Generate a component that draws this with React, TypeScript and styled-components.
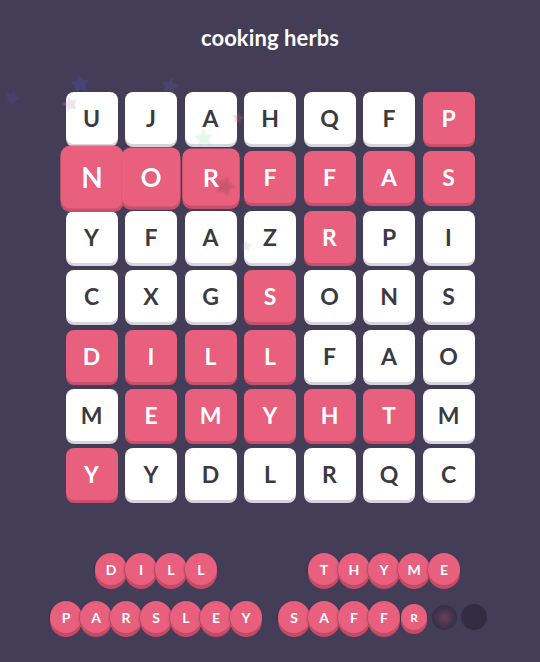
import React from "react";
import styled, { createGlobalStyle } from "styled-components";

const GlobalStyle = createGlobalStyle`
  html, body {
    margin: 0;
    padding: 0;
    background: #433d57;
  }
  body {
    font-family: "Lato", "Open Sans", sans-serif;
    -webkit-font-smoothing: antialiased;
  }
`;

const Page = styled.div`
  position: relative;
  width: 540px;
  height: 662px;
  overflow: hidden;
  display: flex;
  flex-direction: column;
  align-items: center;
  background: #433d57;
`;

const Title = styled.h1`
  margin: 25px 0 0;
  font-size: 22px;
  line-height: 26px;
  font-weight: 700;
  color: #ffffff;
  letter-spacing: 0.1px;
`;

const Board = styled.div`
  margin-top: 41px;
  display: grid;
  grid-template-columns: repeat(7, 52px);
  grid-auto-rows: 52px;
  gap: 7.4px 7.5px;
`;

const Tile = styled.div<{ $found: boolean; $scale: number }>`
  position: relative;
  z-index: ${(p) => (p.$scale > 1 ? 2 : 1)};
  display: flex;
  align-items: center;
  justify-content: center;
  border-radius: 8px;
  font-size: 23px;
  font-weight: 700;
  background: ${(p) => (p.$found ? "#e8607d" : "#ffffff")};
  color: ${(p) => (p.$found ? "#ffffff" : "#3c3a41")};
  box-shadow: 0 3px 0 ${(p) => (p.$found ? "#c94f6a" : "#d6d4dd")};
  transform: scale(${(p) => p.$scale});
`;

const Words = styled.div`
  margin-top: 53px;
  display: grid;
  grid-template-columns: repeat(2, 228px);
  row-gap: 16px;
`;

const Word = styled.div`
  display: flex;
  justify-content: center;
`;

const Slot = styled.div`
  width: 30px;
  height: 32px;
  display: flex;
  align-items: center;
  justify-content: center;
`;

const Bubble = styled.div<{ $size: number; $state: "found" | "fading" | "empty" }>`
  flex-shrink: 0;
  width: ${(p) => p.$size}px;
  height: ${(p) => p.$size}px;
  border-radius: 50%;
  display: flex;
  align-items: center;
  justify-content: center;
  font-size: ${(p) => Math.round(p.$size * 0.45)}px;
  font-weight: 700;
  color: ${(p) => (p.$state === "found" ? "#ffffff" : "rgba(232, 96, 125, 0.6)")};
  background: ${(p) =>
    p.$state === "fading"
      ? "radial-gradient(circle, #6a4158 0%, #4a3550 40%, #322d43 75%)"
      : p.$state === "found"
      ? "#e8607d"
      : "#322d43"};
  box-shadow: ${(p) =>
    p.$state === "found"
      ? "0 4px 0 #c44b66, -1px 1px 2px rgba(40, 30, 50, 0.35)"
      : "none"};
`;

/* Confetti stars left over from the last found word, drawn over the board */
const Sparkles = styled.svg`
  position: absolute;
  left: 0;
  top: 0;
  pointer-events: none;
  z-index: 5;
`;

const STAR = "M12 1.5l3.1 6.6 7.2.9-5.3 5 1.4 7.1L12 17.6l-6.4 3.5 1.4-7.1-5.3-5 7.2-.9z";

const stars = [
  { x: 80, y: 84, s: 22, c: "#5650c8", o: 0.3, r: -8 },
  { x: 170, y: 86, s: 20, c: "#6a62c0", o: 0.22, r: 12 },
  { x: 12, y: 98, s: 20, c: "#5a3f8a", o: 0.35, r: 20 },
  { x: 70, y: 104, s: 18, c: "#c8a0d8", o: 0.3, r: -15 },
  { x: 238, y: 118, s: 14, c: "#e07090", o: 0.25, r: 10 },
  { x: 204, y: 138, s: 22, c: "#8fd89a", o: 0.2, r: -6 },
  { x: 225, y: 186, s: 24, c: "#a84860", o: 0.45, r: 18 },
  { x: 284, y: 198, s: 16, c: "#c07090", o: 0.15, r: -10 },
  { x: 246, y: 246, s: 14, c: "#8080c0", o: 0.15, r: 5 },
];

const grid = [
  "UJAHQFP",
  "NORFFAS",
  "YFAZRPI",
  "CXGSONS",
  "DILLFAO",
  "MEMYHTM",
  "YYDLRQC",
];

const found = [
  "......#",
  "#######",
  "....#..",
  "...#...",
  "####...",
  ".#####.",
  "#......",
];

const scales: Record<string, number> = { "1-0": 1.21, "1-1": 1.13, "1-2": 1.1 };

type Letter = { ch: string; state: "found" | "fading" | "empty"; size: number };

const f = (ch: string, size = 32): Letter => ({ ch, state: "found", size });

const wordRows: Letter[][] = [
  "DILL".split("").map((c) => f(c)),
  "THYME".split("").map((c) => f(c)),
  "PARSLEY".split("").map((c) => f(c)),
  [
    f("S"),
    f("A"),
    f("F"),
    f("F"),
    f("R", 26),
    { ch: "", state: "fading", size: 25 },
    { ch: "", state: "empty", size: 26 },
  ],
];

export default function App() {
  return (
    <Page>
      <GlobalStyle />
      <Title>cooking herbs</Title>
      <Board>
        {grid.map((row, r) =>
          row.split("").map((ch, c) => (
            <Tile
              key={`${r}-${c}`}
              $found={found[r][c] === "#"}
              $scale={scales[`${r}-${c}`] ?? 1}
            >
              {ch}
            </Tile>
          ))
        )}
      </Board>
      <Words>
        {wordRows.map((letters, i) => (
          <Word key={i}>
            {letters.map((l, j) => (
              <Slot key={j}>
                <Bubble $size={l.size} $state={l.state}>
                  {l.ch}
                </Bubble>
              </Slot>
            ))}
          </Word>
        ))}
      </Words>
      <Sparkles width={540} height={662} viewBox="0 0 540 662">
        <defs>
          <filter id="soft" x="-50%" y="-50%" width="200%" height="200%">
            <feGaussianBlur stdDeviation="0.8" />
          </filter>
        </defs>
        {stars.map((st, i) => (
          <path
            key={i}
            d={STAR}
            fill={st.c}
            opacity={st.o}
            filter="url(#soft)"
            transform={`translate(${st.x} ${st.y}) rotate(${st.r}) scale(${st.s / 24}) translate(-12 -12)`}
          />
        ))}
      </Sparkles>
    </Page>
  );
}
